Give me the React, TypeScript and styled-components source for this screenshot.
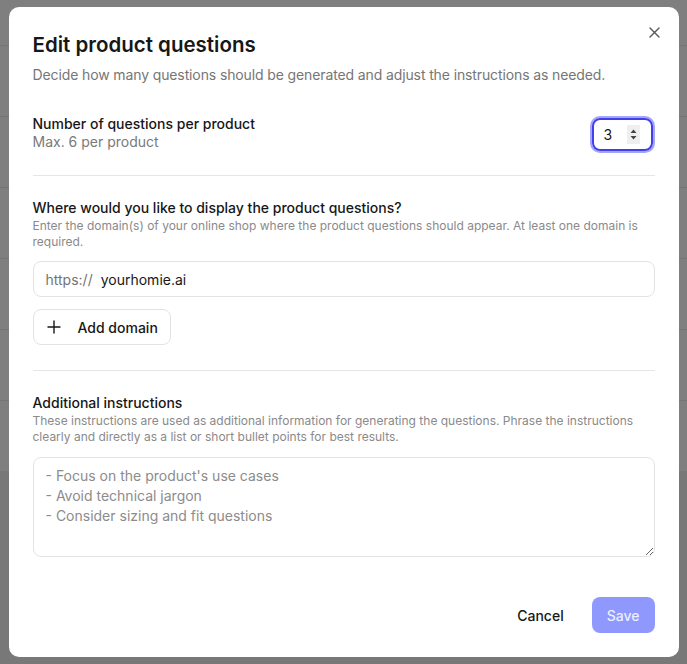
import styled, { createGlobalStyle } from 'styled-components';

const GlobalStyle = createGlobalStyle`
  * { box-sizing: border-box; }
  html, body { margin: 0; padding: 0; }
  body {
    font-family: Inter, "Noto Sans", sans-serif;
    color: #171717;
    background: #f0f0f0;
  }
`;

const Page = styled.div`
  height: 664px;
  overflow: hidden;
`;
const PageTable = styled.div`
  background: #ffffff;
  padding-top: 45px;
`;
const PageRow = styled.div`
  height: 71px;
  border-top: 1px solid #ebebeb;
`;

const Backdrop = styled.div`
  position: fixed;
  inset: 0;
  background: rgba(0, 0, 0, 0.5);
  display: flex;
  align-items: center;
  justify-content: center;
`;
const Dialog = styled.div`
  position: relative;
  width: 670px;
  background: #fff;
  border-radius: 10px;
  padding: 24px;
  display: flex;
  flex-direction: column;
`;
const Close = styled.button`
  position: absolute;
  top: 15px;
  right: 14px;
  width: 20px;
  height: 20px;
  padding: 0;
  border: none;
  background: none;
  color: #555;
  display: flex;
  align-items: center;
  justify-content: center;
`;
const Title = styled.h2`
  margin: 0;
  font-size: 20.5px;
  line-height: 28px;
  font-weight: 600;
`;
const Subtitle = styled.p`
  margin: 6px 0 0;
  font-size: 14px;
  line-height: 20px;
  letter-spacing: -0.12px;
  color: #767676;
`;
const Row = styled.div`
  margin-top: 29px;
  display: flex;
  justify-content: space-between;
  align-items: flex-start;
`;
const Label = styled.div`
  font-size: 14px;
  line-height: 20px;
  font-weight: 500;
`;
const Hint = styled.div`
  font-size: 14px;
  line-height: 16px;
  color: #7a7a7a;
`;
const Help = styled.p`
  margin: 0;
  font-size: 12px;
  line-height: 16px;
  color: #8a8a8a;
`;
const Divider = styled.hr<{ $top: number }>`
  margin: ${(p) => p.$top}px 0 22px;
  border: none;
  border-top: 1px solid #e6e6e6;
`;
const NumberBox = styled.div`
  margin: 4px 2px 0 0;
  width: 61px;
  height: 33px;
  border: 2px solid #4240ee;
  border-radius: 8px;
  box-shadow: 0 0 0 2px #a3a6fb;
  display: flex;
  align-items: center;
  padding: 0 11px 0 10px;
  justify-content: space-between;
  font-size: 14px;
`;
const Spinner = styled.span`
  width: 13px;
  height: 19px;
  background: #efefef;
  display: flex;
  align-items: center;
  justify-content: center;
`;
const Field = styled.div`
  margin-top: 11px;
  height: 36px;
  border: 1px solid #e3e3e3;
  border-radius: 8px;
  display: flex;
  align-items: center;
  padding: 0 12px;
  font-size: 14px;
  gap: 8px;
`;
const Prefix = styled.span`
  color: #737373;
`;
const AddButton = styled.button`
  margin-top: 12px;
  align-self: flex-start;
  height: 36px;
  padding: 0 12px 0 13px;
  border: 1px solid #e3e3e3;
  border-radius: 8px;
  background: #fff;
  display: flex;
  align-items: center;
  gap: 17px;
  font-family: inherit;
  font-size: 14px;
  font-weight: 500;
  color: #171717;
`;
const TextArea = styled.textarea`
  margin-top: 12px;
  height: 100px;
  border: 1px solid #e3e3e3;
  border-radius: 8px;
  padding: 8px 12px;
  font-family: inherit;
  font-size: 14px;
  line-height: 20px;
  outline: none;
  &::placeholder { color: #8c8c8c; }
`;
const Footer = styled.div`
  margin-top: 40px;
  display: flex;
  justify-content: flex-end;
  gap: 12px;
`;
const FooterButton = styled.button<{ $primary?: boolean }>`
  height: 36px;
  padding: 0 ${(p) => (p.$primary ? 15 : 16)}px;
  border: none;
  border-radius: 8px;
  font-family: inherit;
  font-size: 14px;
  font-weight: 500;
  background: ${(p) => (p.$primary ? '#8f99fd' : 'transparent')};
  color: ${(p) => (p.$primary ? '#eceeff' : '#171717')};
`;

function App() {
  return (
    <Page>
      <GlobalStyle />
      <PageTable>
        {[0, 1, 2, 3, 4, 5].map((i) => (
          <PageRow key={i} />
        ))}
      </PageTable>
      <Backdrop>
        <Dialog>
          <Close aria-label='Close'>
            <svg width='11' height='11' viewBox='0 0 11 11' fill='none' stroke='currentColor' strokeWidth='1.4' strokeLinecap='round'>
              <path d='M1 1l9 9M10 1l-9 9' />
            </svg>
          </Close>
          <Title>Edit product questions</Title>
          <Subtitle>Decide how many questions should be generated and adjust the instructions as needed.</Subtitle>

          <Row>
            <div>
              <Label>Number of questions per product</Label>
              <Hint>Max. 6 per product</Hint>
            </div>
            <NumberBox>
              3
              <Spinner>
                <svg width='7' height='11' viewBox='0 0 7 11' fill='#444'>
                  <path d='M3.5 0.5L6.5 4H0.5z M3.5 10.5L6.5 7H0.5z' />
                </svg>
              </Spinner>
            </NumberBox>
          </Row>

          <Divider $top={24} />
          <Label>Where would you like to display the product questions?</Label>
          <Help>
            Enter the domain(s) of your online shop where the product questions should appear. At least one domain is
            required.
          </Help>
          <Field>
            <Prefix>https://</Prefix>
            yourhomie.ai
          </Field>
          <AddButton>
            <svg width='14' height='14' viewBox='0 0 14 14' fill='none' stroke='#171717' strokeWidth='1.4' strokeLinecap='round'>
              <path d='M7 1v12M1 7h12' />
            </svg>
            Add domain
          </AddButton>

          <Divider $top={25} />
          <Label>Additional instructions</Label>
          <Help>
            These instructions are used as additional information for generating the questions. Phrase the instructions
            clearly and directly as a list or short bullet points for best results.
          </Help>
          <TextArea
            placeholder={"- Focus on the product's use cases\n- Avoid technical jargon\n- Consider sizing and fit questions"}
          />

          <Footer>
            <FooterButton>Cancel</FooterButton>
            <FooterButton $primary>Save</FooterButton>
          </Footer>
        </Dialog>
      </Backdrop>
    </Page>
  );
}

export default App;
